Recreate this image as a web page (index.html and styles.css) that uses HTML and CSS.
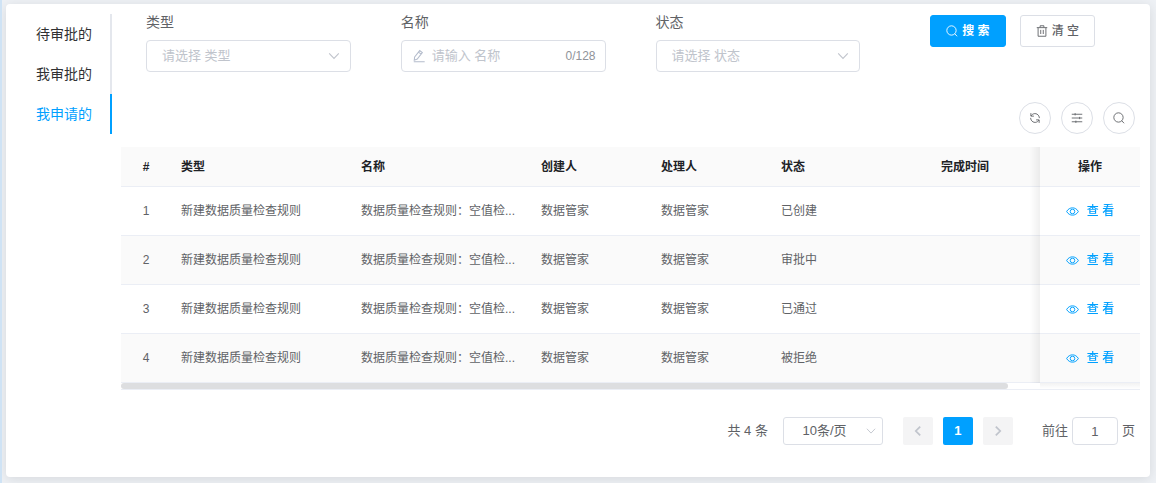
FILE: index.html
```html
<!DOCTYPE html>
<html lang="zh-CN">
<head>
<meta charset="utf-8">
<meta name="viewport" content="width=device-width, initial-scale=1">
<title>我申请的</title>
<link rel="stylesheet" href="styles.css">
</head>
<body>
<svg class="sprite" aria-hidden="true">
  <symbol id="i-search" viewBox="0 0 16 16"><circle cx="7.3" cy="7.3" r="6.200"/><path d="M11.6 11.6 14.8 15"/></symbol>
  <symbol id="i-trash" viewBox="0 0 16 16"><path d="M1 3.500h14M5.500 3.200V1h5v2.200M2.800 3.800V15h10.400V3.800M6.300 6.500v5.500M9.700 6.500v5.500"/></symbol>
  <symbol id="i-edit" viewBox="0 0 16 16"><path d="M3 9.2 8.8 1.8l3 2.3-5.8 7.400-3.400 1.400zM7.400 3.600l3 2.300M2 14.500h12.500"/></symbol>
  <symbol id="i-down" viewBox="0 0 16 16"><path d="M2.5 5 8 10.800 13.500 5"/></symbol>
  <symbol id="i-left" viewBox="0 0 16 16"><path d="M10.500 3 5.500 8l5 5"/></symbol>
  <symbol id="i-right" viewBox="0 0 16 16"><path d="M5.500 3l5 5-5 5"/></symbol>
  <symbol id="i-refresh" viewBox="0 0 16 16"><path d="M2.500 1.500v4h4M2.700 5.300C5 1.200 10.600 1 13 5.200c.6 1 .8 2 .8 3M13.500 14.500v-4h-4M13.300 10.700C11 14.800 5.400 15 3 10.800c-.6-1-.8-2-.8-3"/></symbol>
  <symbol id="i-filter" viewBox="0 0 16 16"><path d="M1 3h14M1 8h14M1 13h14M5.500 1.500v3M11.500 6.500v3M6.500 11.500v3"/></symbol>
  <symbol id="i-eye" viewBox="0 0 16 16"><path d="M.8 8C4 2 12 2 15.200 8 12 14 4 14 .8 8z"/><circle cx="8" cy="8" r="2.800"/></symbol>
</svg>

<div class="card">
  <nav class="tabs">
    <button class="tab" type="button">待审批的</button>
    <button class="tab" type="button">我审批的</button>
    <button class="tab tab-active" type="button" aria-current="page">我申请的</button>
  </nav>

  <main class="main">
    <form class="filters">
      <div class="field">
        <label for="f-type">类型</label>
        <div class="box">
          <select id="f-type" class="control placeholder"><option>请选择 类型</option></select>
          <svg class="icon arrow"><use href="#i-down"/></svg>
        </div>
      </div>
      <div class="field">
        <label for="f-name">名称</label>
        <div class="control text-control">
          <svg class="icon"><use href="#i-edit"/></svg>
          <input id="f-name" type="text" maxlength="128" placeholder="请输入 名称">
          <span class="count">0/128</span>
        </div>
      </div>
      <div class="field">
        <label for="f-state">状态</label>
        <div class="box">
          <select id="f-state" class="control placeholder"><option>请选择 状态</option></select>
          <svg class="icon arrow"><use href="#i-down"/></svg>
        </div>
      </div>
      <div class="actions">
        <button class="btn btn-primary" type="button"><svg class="icon"><use href="#i-search"/></svg>搜 索</button>
        <button class="btn" type="button"><svg class="icon"><use href="#i-trash"/></svg>清 空</button>
      </div>
    </form>

    <div class="toolbar">
      <button class="round" type="button" aria-label="刷新"><svg class="icon"><use href="#i-refresh"/></svg></button>
      <button class="round" type="button" aria-label="列设置"><svg class="icon"><use href="#i-filter"/></svg></button>
      <button class="round" type="button" aria-label="搜索"><svg class="icon"><use href="#i-search"/></svg></button>
    </div>

    <div class="table-wrap">
      <div class="scroller">
        <table class="table">
          <colgroup><col class="c-index"><col class="c-wide"><col class="c-wide"><col class="c-user"><col class="c-user"><col class="c-state"><col class="c-time"><col class="c-op"></colgroup>
          <thead>
            <tr><th class="center">#</th><th>类型</th><th>名称</th><th>创建人</th><th>处理人</th><th>状态</th><th>完成时间</th><th class="fixed">操作</th></tr>
          </thead>
          <tbody>
            <tr><td class="center">1</td><td>新建数据质量检查规则</td><td>数据质量检查规则：空值检...</td><td>数据管家</td><td>数据管家</td><td>已创建</td><td></td><td class="fixed"><button class="link" type="button"><svg class="icon"><use href="#i-eye"/></svg>查 看</button></td></tr>
            <tr><td class="center">2</td><td>新建数据质量检查规则</td><td>数据质量检查规则：空值检...</td><td>数据管家</td><td>数据管家</td><td>审批中</td><td></td><td class="fixed"><button class="link" type="button"><svg class="icon"><use href="#i-eye"/></svg>查 看</button></td></tr>
            <tr><td class="center">3</td><td>新建数据质量检查规则</td><td>数据质量检查规则：空值检...</td><td>数据管家</td><td>数据管家</td><td>已通过</td><td></td><td class="fixed"><button class="link" type="button"><svg class="icon"><use href="#i-eye"/></svg>查 看</button></td></tr>
            <tr><td class="center">4</td><td>新建数据质量检查规则</td><td>数据质量检查规则：空值检...</td><td>数据管家</td><td>数据管家</td><td>被拒绝</td><td></td><td class="fixed"><button class="link" type="button"><svg class="icon"><use href="#i-eye"/></svg>查 看</button></td></tr>
          </tbody>
        </table>
      </div>
      <div class="track"><div class="thumb"></div><div class="shade"></div></div>
    </div>

    <div class="pager">
      <span class="total">共 4 条</span>
      <div class="box size">
        <select class="page-size" aria-label="每页条数"><option>10条/页</option></select>
        <svg class="icon arrow"><use href="#i-down"/></svg>
      </div>
      <div class="pages">
        <button class="page" type="button" aria-label="上一页" disabled><svg class="icon"><use href="#i-left"/></svg></button>
        <button class="page page-active" type="button">1</button>
        <button class="page" type="button" aria-label="下一页" disabled><svg class="icon"><use href="#i-right"/></svg></button>
      </div>
      <label class="jump">前往<input type="text" value="1">页</label>
    </div>
  </main>
</div>
</body>
</html>
```
FILE: styles.css
```css
* {
  box-sizing: border-box;
}

body {
  margin: 0;
  min-height: 100vh;
  padding: 4px 6px 6px 4px;
  border-left: 2px solid #cfe3f5;
  background: #eef1f5;
  color: #606266;
  font: 14px/20px "Liberation Sans", "Noto Sans CJK SC", sans-serif;
}

button,
input,
select {
  font: inherit;
  color: inherit;
}

button {
  padding: 0;
  cursor: pointer;
}

.sprite {
  display: none;
}

.icon {
  flex: none;
  width: 14px;
  height: 14px;
  fill: none;
  stroke: currentColor;
  stroke-width: 1.2;
}

.card {
  display: flex;
  align-items: flex-start;
  gap: 9px;
  padding: 10px 10px 32px;
  border-radius: 4px;
  background: #fff;
  box-shadow: 0 2px 12px rgba(0, 0, 0, 0.1);
}

/* Side tabs */
.tabs {
  flex: none;
  display: flex;
  flex-direction: column;
}

.tab {
  height: 40px;
  padding: 0 18px 0 20px;
  border: 0;
  border-right: 2px solid #e4e7ed;
  background: none;
  color: #303133;
}

.tab-active {
  border-color: #00a0ff;
  color: #00a0ff;
}

.main {
  flex: 1;
  min-width: 0;
}

/* Filters */
.filters {
  display: grid;
  grid-template-columns: repeat(4, minmax(0, 1fr));
}

.field {
  padding: 0 25px;
}

.field label {
  display: block;
  height: 26px;
  line-height: 16px;
}

.box {
  position: relative;
}

.control {
  display: block;
  width: 100%;
  height: 32px;
  padding: 0 30px 0 15px;
  border: 1px solid #dcdfe6;
  border-radius: 4px;
  background: #fff;
  font-size: 13px;
  appearance: none;
}

.placeholder,
.arrow {
  color: #c0c4cc;
}

.arrow {
  position: absolute;
  top: 9px;
  right: 10px;
  pointer-events: none;
}

.text-control {
  display: flex;
  align-items: center;
  gap: 6px;
  padding: 0 9px 0 10px;
}

.text-control .icon {
  color: #b4bccc;
}

.text-control input {
  flex: 1;
  min-width: 0;
  padding: 0;
  border: 0;
  outline: 0;
  background: none;
}

.text-control input::placeholder {
  color: #c0c4cc;
}

.count {
  color: #909399;
  font-size: 12px;
}

.actions {
  display: flex;
  justify-content: center;
  gap: 14px;
  padding-top: 1px;
}

.btn {
  display: flex;
  align-items: center;
  gap: 4px;
  height: 32px;
  padding: 0 15px;
  border: 1px solid #dcdfe6;
  border-radius: 3px;
  background: #fff;
  font-size: 12px;
  font-weight: 500;
}

.btn .icon {
  width: 12px;
  height: 12px;
}

.btn-primary {
  border-color: #00a0ff;
  background: #00a0ff;
  color: #fff;
  font-weight: 700;
}

/* Table tools */
.toolbar {
  display: flex;
  justify-content: flex-end;
  gap: 10px;
  padding: 30px 5px 13px;
}

.round {
  display: flex;
  align-items: center;
  justify-content: center;
  width: 32px;
  height: 32px;
  border: 1px solid #dcdfe6;
  border-radius: 50%;
  background: #fff;
}

.round .icon {
  width: 12px;
  height: 12px;
}

/* Table */
.table-wrap {
  border-bottom: 1px solid #ebeef5;
}

.scroller {
  overflow-x: auto;
  scrollbar-width: none;
}

.table {
  width: 1170px;
  table-layout: fixed;
  border-collapse: separate;
  border-spacing: 0;
  font-size: 12px;
}

.c-index {
  width: 50px;
}

.c-wide {
  width: 180px;
}

.c-user {
  width: 120px;
}

.c-state {
  width: 160px;
}

.c-time {
  width: 260px;
}

.c-op {
  width: 100px;
}

.table th,
.table td {
  height: 49px;
  padding: 0 10px;
  overflow: hidden;
  border-bottom: 1px solid #ebeef5;
  background: #fff;
  text-align: left;
  text-overflow: ellipsis;
  white-space: nowrap;
}

.table th {
  height: 40px;
  background: #fafafa;
  color: #202226;
}

.table tr:nth-child(even) td {
  background: #fafafa;
}

.table .center {
  text-align: center;
}

.table .fixed {
  position: sticky;
  right: 0;
  overflow: visible;
  text-align: center;
}

.fixed::before {
  content: "";
  position: absolute;
  top: 0;
  bottom: -1px;
  right: 100%;
  width: 10px;
  background: linear-gradient(to left, rgba(0, 0, 0, 0.06), transparent);
}

.link {
  display: inline-flex;
  align-items: center;
  gap: 8px;
  border: 0;
  background: none;
  color: #00a0ff;
  font-weight: 500;
  vertical-align: middle;
}

.link .icon {
  width: 13px;
  height: 13px;
}

.track {
  position: relative;
  height: 6px;
}

.thumb {
  width: 87%;
  height: 6px;
  border-radius: 3px;
  background: #dddee0;
}

.shade {
  position: absolute;
  top: 0;
  right: 0;
  width: 100px;
  height: 6px;
  background: linear-gradient(rgba(0, 0, 0, 0.05), transparent);
}

/* Pagination */
.pager {
  display: flex;
  align-items: center;
  justify-content: flex-end;
  padding: 27px 5px 0;
  font-size: 13px;
}

.size {
  width: 100px;
  margin: 0 20px 0 15px;
}

.page-size {
  display: block;
  width: 100%;
  height: 28px;
  padding: 0 25px 0 8px;
  border: 1px solid #dcdfe6;
  border-radius: 3px;
  background: #fff;
  text-align: center;
  text-align-last: center;
  appearance: none;
}

.size .arrow {
  top: 8px;
  right: 6px;
  width: 12px;
  height: 12px;
}

.pages {
  display: flex;
  gap: 10px;
}

.page {
  display: flex;
  align-items: center;
  justify-content: center;
  width: 30px;
  height: 28px;
  border: 0;
  border-radius: 2px;
  background: #f4f4f5;
  color: #c0c4cc;
  font-weight: 700;
}

.page .icon {
  stroke-width: 2;
}

.page-active {
  background: #00a0ff;
  color: #fff;
}

.jump {
  display: flex;
  align-items: center;
  gap: 4px;
  margin-left: 29px;
}

.jump input {
  width: 46px;
  height: 28px;
  padding: 0 3px;
  border: 1px solid #dcdfe6;
  border-radius: 4px;
  background: #fff;
  text-align: center;
}
```
